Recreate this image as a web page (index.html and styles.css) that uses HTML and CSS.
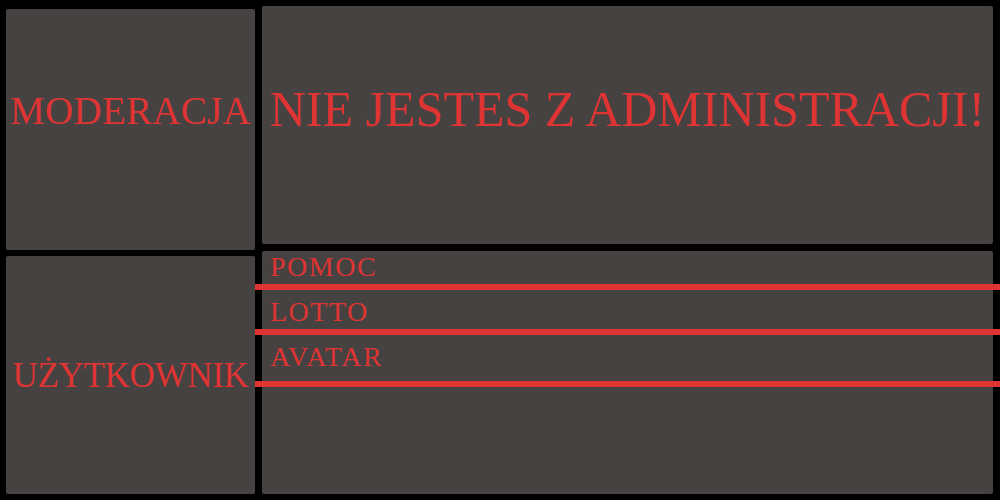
FILE: index.html
```html
<!DOCTYPE html>
<html lang="pl">
<head>
<meta charset="utf-8">
<title>Moderacja</title>
<link rel="stylesheet" href="styles.css">
</head>
<body>
<div class="page">
  <div class="col col-left">
    <div class="panel panel-mod"><span class="side-title">MODERACJA</span></div>
    <div class="panel panel-user"><span class="side-title side-title-user">UŻYTKOWNIK</span></div>
  </div>
  <div class="col col-right">
    <div class="panel panel-main"><h1 class="main-title">NIE JESTES Z ADMINISTRACJI!</h1></div>
    <div class="panel panel-menu">
      <ul class="menu">
        <li class="menu-item menu-item-first">POMOC</li>
        <li class="menu-item">LOTTO</li>
        <li class="menu-item menu-item-last">AVATAR</li>
      </ul>
    </div>
  </div>
</div>
</body>
</html>
```

FILE: styles.css
```css
html, body {
  margin: 0;
  padding: 0;
  background: #000;
}
body {
  width: 1000px;
  height: 500px;
  overflow: hidden;
  font-family: "Liberation Serif", "Times New Roman", serif;
  color: #df3434;
}
.page {
  display: flex;
  gap: 7px;
  padding: 0 7px 0 6px;
  height: 500px;
  box-sizing: border-box;
}
.col {
  display: flex;
  flex-direction: column;
}
.col-left {
  width: 249px;
  padding-top: 9px;
  gap: 6px;
}
.col-right {
  width: 731px;
  padding-top: 6px;
  gap: 7px;
}
.panel {
  background: #464241;
  border-radius: 2px;
}
.panel-mod {
  height: 241px;
  display: flex;
  align-items: center;
  justify-content: center;
  padding-bottom: 39px;
  box-sizing: border-box;
}
.panel-user {
  height: 238px;
  display: flex;
  align-items: center;
  justify-content: center;
}
.side-title {
  font-size: 39px;
  line-height: 1;
  white-space: nowrap;
  letter-spacing: 0.3px;
}
.side-title-user {
  font-size: 35px;
  letter-spacing: -0.3px;
}
.panel-main {
  height: 238px;
  display: flex;
  align-items: center;
  justify-content: center;
  padding-bottom: 33px;
  box-sizing: border-box;
}
.main-title {
  margin: 0;
  font-weight: normal;
  font-size: 50px;
  line-height: 1;
  white-space: nowrap;
}
.panel-menu {
  height: 243px;
}
.menu {
  list-style: none;
  margin: 0;
  padding: 0;
}
.menu-item {
  margin: 0 -7px;
  padding: 8px 15px 3px;
  font-size: 28px;
  line-height: 28px;
  letter-spacing: 1.5px;
  border-bottom: 6px solid #df3434;
}
.menu-item-first {
  padding-top: 2px;
}
.menu-item-last {
  padding-bottom: 10px;
}
```
